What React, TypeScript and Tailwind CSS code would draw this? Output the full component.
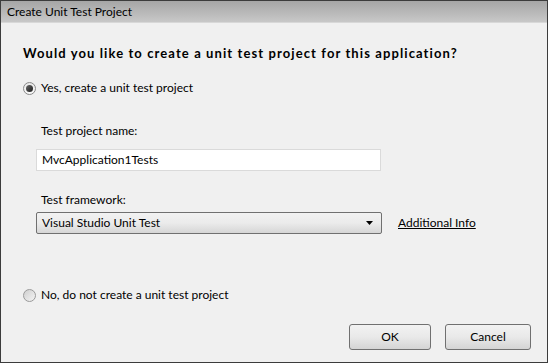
export default function App() {
  return (
    <div
      className="w-[548px] h-[363px] bg-[#f0f0f0] border border-[#3c3c3c] flex flex-col text-[12px] text-black"
      style={{ fontFamily: 'Lato, "Open Sans", sans-serif' }}
    >
      {/* Title bar */}
      <div className="h-[22px] shrink-0 flex items-center px-[6px] pt-[1px] bg-gradient-to-b from-[#a6a6a6] to-[#c8c8c8] border-b border-[#d8d8d8]">
        <span className="text-[12px] leading-none">Create Unit Test Project</span>
      </div>

      <div className="flex-1 flex flex-col pl-[22px] pr-[16px]">
        <p className="mt-[22px] font-bold leading-[16px] text-[13px] tracking-[1.1px]">
          Would you like to create a unit test project for this application?
        </p>

        {/* Yes option */}
        <label className="mt-[19px] flex items-center gap-[5px] leading-[16px]">
          <span className="w-[13px] h-[13px] rounded-full border border-[#8a8a8a] bg-gradient-to-b from-[#e8e8e8] to-[#fafafa] flex items-center justify-center">
            <span className="w-[7px] h-[7px] rounded-full bg-gradient-to-br from-[#6a6a6a] to-[#1e1e1e]" />
          </span>
          <span>Yes, create a unit test project</span>
        </label>

        <div className="mt-[27px] pl-[13px] flex flex-col">
          <span className="pl-[5px] leading-[16px]">Test project name:</span>
          <div className="mt-[10px] w-[345px] h-[22px] bg-white border border-[#dadada] flex items-center px-[5px]">
            MvcApplication1Tests
          </div>

          <span className="mt-[21px] pl-[5px] leading-[16px]">Test framework:</span>
          <div className="mt-[4px] flex items-center">
            <div className="w-[346px] h-[22px] rounded-[2px] border border-[#707070] bg-gradient-to-b from-[#f2f2f2] via-[#ebebeb] to-[#d6d6d6] flex items-center justify-between pl-[5px] pr-[7px]">
              <span>Visual Studio Unit Test</span>
              <svg width="8" height="4" viewBox="0 0 8 4">
                <path d="M0 0h7L3.5 4z" fill="#000" />
              </svg>
            </div>
            <a className="ml-[16px] underline text-black">Additional Info</a>
          </div>
        </div>

        {/* No option */}
        <label className="mt-[53px] flex items-center gap-[5px] leading-[16px]">
          <span className="w-[13px] h-[13px] rounded-full border border-[#9a9a9a] bg-gradient-to-br from-[#cfcfcf] to-[#f4f4f4]" />
          <span>No, do not create a unit test project</span>
        </label>

        <div className="mt-[21px] flex justify-end gap-[14px]">
          <button className="w-[82px] h-[26px] rounded-[3px] border border-[#707070] bg-gradient-to-b from-[#f2f2f2] via-[#e9e9e9] to-[#d4d4d4]">
            OK
          </button>
          <button className="w-[86px] h-[26px] rounded-[3px] border border-[#707070] bg-gradient-to-b from-[#f2f2f2] via-[#e9e9e9] to-[#d4d4d4]">
            Cancel
          </button>
        </div>
      </div>
    </div>
  )
}
